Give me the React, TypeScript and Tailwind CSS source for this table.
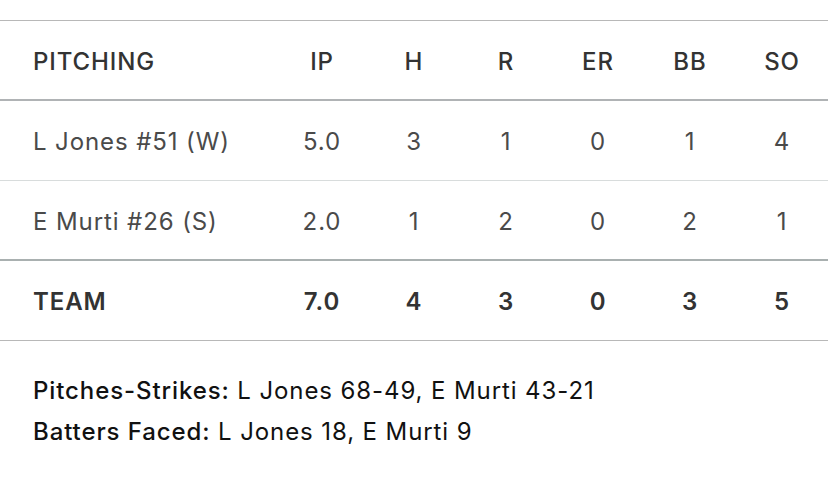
const columns = ['IP', 'H', 'R', 'ER', 'BB', 'SO']

const pitchers = [
  { name: 'L Jones #51 (W)', stats: ['5.0', '3', '1', '0', '1', '4'] },
  { name: 'E Murti #26 (S)', stats: ['2.0', '1', '2', '0', '2', '1'] },
]

const team = ['7.0', '4', '3', '0', '3', '5']

const rowGrid = 'grid grid-cols-[276px_repeat(6,92px)] items-center h-[80px] pt-[3px]'

export default function App() {
  return (
    <div className="w-[828px] h-[478px] bg-white pt-[20px] font-['Inter','Liberation_Sans',sans-serif] text-[24px] tracking-[0.9px]">
      {/* Header */}
      <div className={`${rowGrid} border-t border-b-2 border-t-[#b8b8b8] border-b-[#b0b3b5] h-[81px]`}>
        <div className="pl-[33px] font-medium text-[#333]">PITCHING</div>
        {columns.map((c) => (
          <div key={c} className="text-center font-medium text-[#333]">
            {c}
          </div>
        ))}
      </div>

      {/* Pitchers */}
      {pitchers.map((p, i) => (
        <div
          key={p.name}
          className={`${rowGrid} ${
            i === pitchers.length - 1 ? 'border-b-2 border-[#a9b0b0]' : 'border-b border-[#d8dcdc]'
          }`}
        >
          <div className="pl-[33px] font-normal text-[#4a4a4a]">{p.name}</div>
          {p.stats.map((s, j) => (
            <div key={j} className="text-center font-normal text-[#4a4a4a]">
              {s}
            </div>
          ))}
        </div>
      ))}

      {/* Team */}
      <div className={`${rowGrid} border-b border-[#b8b8b8] h-[79px]`}>
        <div className="pl-[33px] font-semibold text-[#333]">TEAM</div>
        {team.map((s, j) => (
          <div key={j} className="text-center font-semibold text-[#333]">
            {s}
          </div>
        ))}
      </div>

      {/* Notes */}
      <div className="pl-[33px] pt-[29px] text-[#111] leading-[41px]">
        <p>
          <span className="font-medium">Pitches-Strikes:</span> L Jones 68-49, E Murti 43-21
        </p>
        <p>
          <span className="font-medium">Batters Faced:</span> L Jones 18, E Murti 9
        </p>
      </div>
    </div>
  )
}
